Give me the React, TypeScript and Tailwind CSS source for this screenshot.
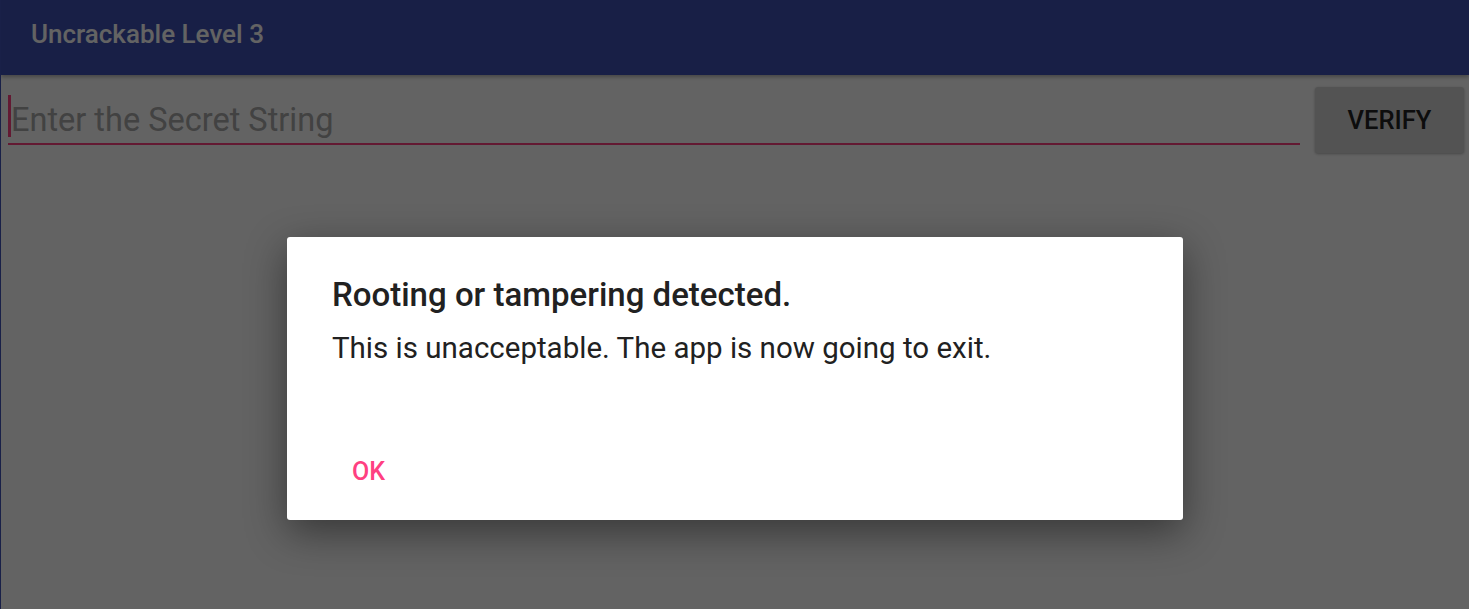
export default function App() {
  return (
    <div
      className="relative h-[609px] w-[1469px] overflow-hidden border-l border-[#192048] bg-white"
      style={{ fontFamily: "Roboto, 'Liberation Sans', sans-serif" }}
    >
      {/* App bar */}
      <header className="flex h-[75px] items-center bg-[#3f51b5] pb-[7px] pl-[30px] shadow-[0_2px_4px_rgba(0,0,0,0.3)]">
        <h1 className="text-[26px] font-medium text-white">Uncrackable Level 3</h1>
      </header>

      {/* Input row */}
      <div className="flex items-start gap-[15px] pl-[7px] pr-[5px] pt-[12px]">
        <div className="flex-1">
          <div className="flex h-[58px] items-center border-b-2 border-[#ff4081]">
            <span className="mt-[2px] h-[42px] w-[3px] bg-[#ff4081]" />
            <span className="pt-[9px] text-[32.5px] leading-[40px] text-[#a9a9a9]">Enter the Secret String</span>
          </div>
        </div>
        <button className="h-[66px] w-[149px] rounded-[3px] bg-[#d6d7d7] text-[25.5px] font-medium text-[#222] shadow-[0_1px_3px_rgba(0,0,0,0.3)]">
          VERIFY
        </button>
      </div>

      {/* Scrim + dialog */}
      <div className="absolute inset-0 flex justify-center bg-[rgba(0,0,0,0.61)] pt-[237px]">
        <div className="flex h-[283px] w-[896px] flex-col rounded-[3px] bg-white pl-[45px] pt-[39px] shadow-[0_12px_40px_rgba(0,0,0,0.45)]">
          <h2 className="text-[33px] font-medium leading-[38px] text-[#212121]">
            Rooting or tampering detected.
          </h2>
          <p className="mt-[16px] text-[29.5px] leading-[36px] text-[#212121]">
            This is unacceptable. The app is now going to exit.
          </p>
          <div className="mt-auto pb-[33px]">
            <button className="ml-[20px] text-[25px] font-medium leading-[30px] text-[#ff4081]">OK</button>
          </div>
        </div>
      </div>
    </div>
  );
}
